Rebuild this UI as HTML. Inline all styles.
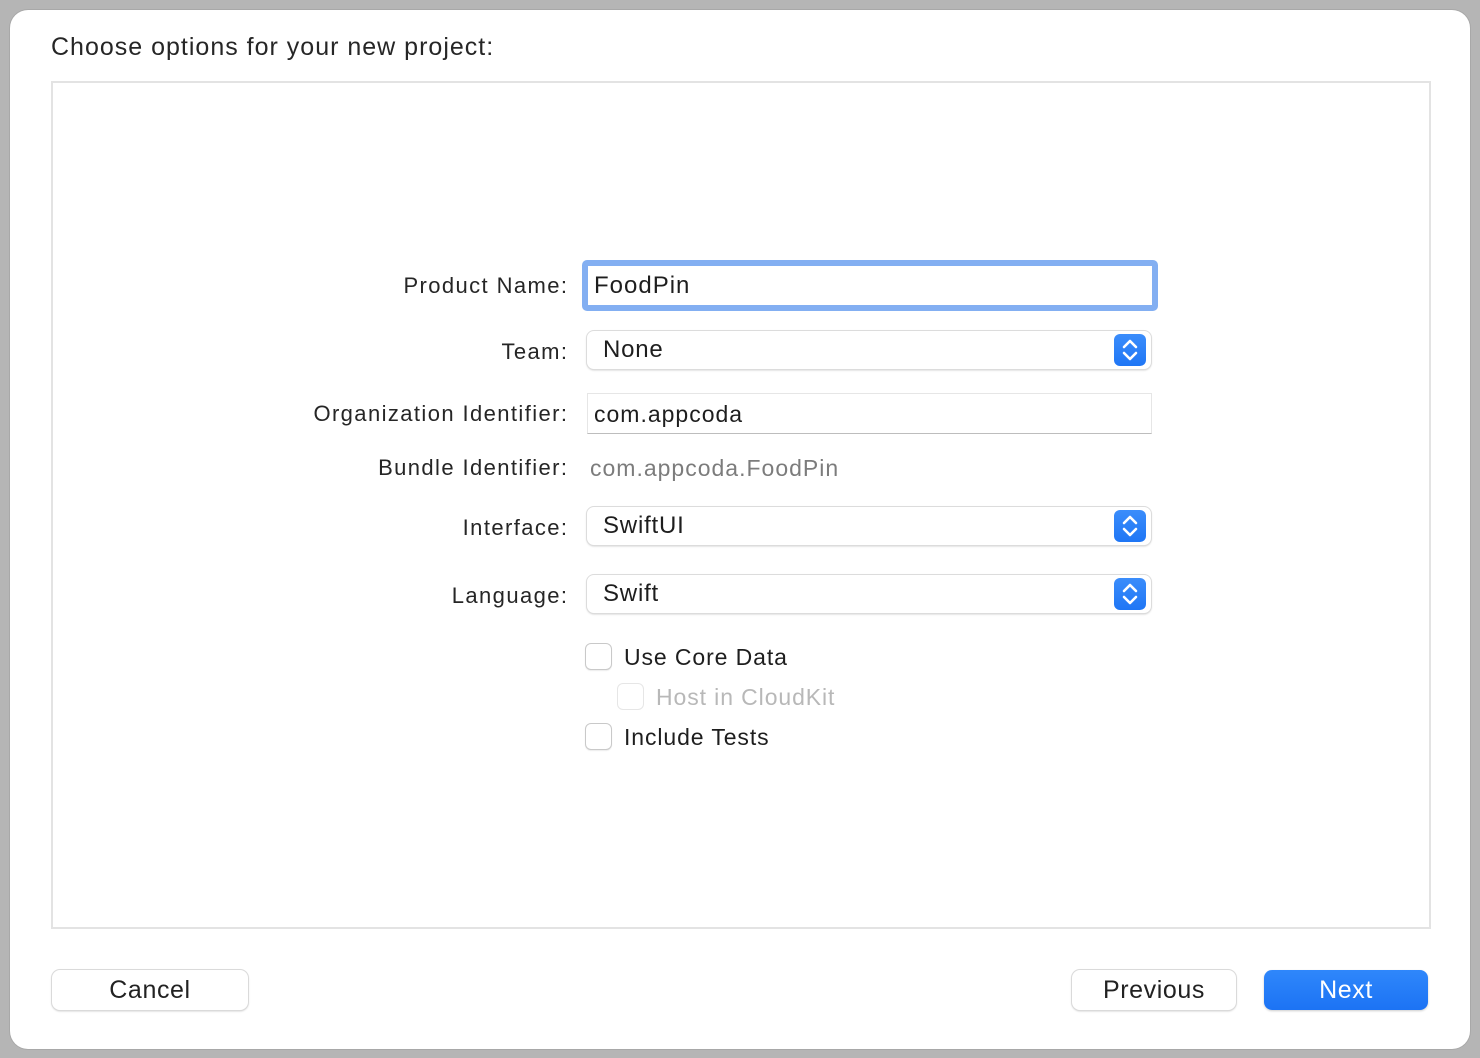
<!DOCTYPE html>
<html><head><meta charset="utf-8"><style>
html,body{margin:0;padding:0}
body{width:1480px;height:1058px;background:#b5b5b5;position:relative;overflow:hidden;font-family:"Liberation Sans",sans-serif;color:#222}
.win{position:absolute;left:10px;top:10px;width:1460px;height:1039px;background:#fff;border-radius:18px;box-shadow:0 0 0 1px #a8a8a8}
.a{position:absolute}
.title{left:51px;top:33px;font-size:25px;color:#262626;letter-spacing:1px}
.panel{left:51px;top:81px;width:1376px;height:844px;border:2px solid #e3e3e3}
.lbl{right:913px;font-size:22px;text-align:right;white-space:nowrap;color:#262626;letter-spacing:1.4px;margin-right:-1.4px}
.field{font-size:23px;color:#1e1e1e;letter-spacing:1px}
.pop{left:587px;width:564px;height:38px;border-radius:7px;background:#fff;box-shadow:0 0 0 1px #dcdcdc,0 1px 2px rgba(0,0,0,.25)}
.pop span{position:absolute;left:16px;top:5px;font-size:24px;color:#1e1e1e;letter-spacing:0.8px}
.step{position:absolute;right:5px;top:3px;width:32px;height:32px;border-radius:6px;background:linear-gradient(#3b8dfb,#1f76f5)}
.cb{width:25px;height:25px;border:1px solid #c9c9c9;border-radius:6px;box-shadow:0 1px 1px rgba(0,0,0,.08);background:#fff}
.cbt{font-size:23px;color:#1e1e1e;letter-spacing:0.9px}
.btn{height:40px;border-radius:8px;background:#fff;box-shadow:0 0 0 1px #dadada,0 1px 2px rgba(0,0,0,.25);font-size:25px;text-align:center;line-height:40px;color:#222;letter-spacing:0.6px}
</style></head><body>
<div class="win"></div>
<div class="a title">Choose options for your new project:</div>
<div class="a panel"></div>

<div class="a lbl" style="top:273px">Product Name:</div>
<div class="a" style="left:582px;top:260px;width:576px;height:51px;border-radius:5px;background:#83aff2"></div>
<div class="a" style="left:588px;top:266px;width:564px;height:39px;background:#fff"></div>
<div class="a field" style="left:594px;top:272px;font-size:24px">FoodPin</div>

<div class="a lbl" style="top:339px">Team:</div>
<div class="a pop" style="top:331px"><span>None</span><div class="step"><svg width="32" height="32" viewBox="0 0 32 32"><path d="M10 13l6-6 6 6M10 19l6 6 6-6" stroke="#fff" stroke-width="2.6" fill="none" stroke-linecap="round" stroke-linejoin="round"/></svg></div></div>

<div class="a lbl" style="top:401px">Organization Identifier:</div>
<div class="a" style="left:587px;top:393px;width:565px;height:41px;border:1px solid #e6e6e6;border-bottom-color:#bdbdbd;box-sizing:border-box"></div>
<div class="a field" style="left:594px;top:401px">com.appcoda</div>

<div class="a lbl" style="top:455px">Bundle Identifier:</div>
<div class="a field" style="left:590px;top:455px;color:#7c7c7c">com.appcoda.FoodPin</div>

<div class="a lbl" style="top:515px">Interface:</div>
<div class="a pop" style="top:507px"><span>SwiftUI</span><div class="step"><svg width="32" height="32" viewBox="0 0 32 32"><path d="M10 13l6-6 6 6M10 19l6 6 6-6" stroke="#fff" stroke-width="2.6" fill="none" stroke-linecap="round" stroke-linejoin="round"/></svg></div></div>

<div class="a lbl" style="top:583px">Language:</div>
<div class="a pop" style="top:575px"><span>Swift</span><div class="step"><svg width="32" height="32" viewBox="0 0 32 32"><path d="M10 13l6-6 6 6M10 19l6 6 6-6" stroke="#fff" stroke-width="2.6" fill="none" stroke-linecap="round" stroke-linejoin="round"/></svg></div></div>

<div class="a cb" style="left:585px;top:643px"></div>
<div class="a cbt" style="left:624px;top:644px">Use Core Data</div>
<div class="a cb" style="left:617px;top:683px;border-color:#e6e6e6;box-shadow:none"></div>
<div class="a cbt" style="left:656px;top:684px;color:#b8b8b8">Host in CloudKit</div>
<div class="a cb" style="left:585px;top:723px"></div>
<div class="a cbt" style="left:624px;top:724px">Include Tests</div>

<div class="a btn" style="left:52px;top:970px;width:196px">Cancel</div>
<div class="a btn" style="left:1072px;top:970px;width:164px">Previous</div>
<div class="a btn" style="left:1264px;top:970px;width:164px;background:linear-gradient(#2f87fb,#1c73f4);box-shadow:0 1px 2px rgba(0,0,0,.2);color:#fff">Next</div>
</body></html>
